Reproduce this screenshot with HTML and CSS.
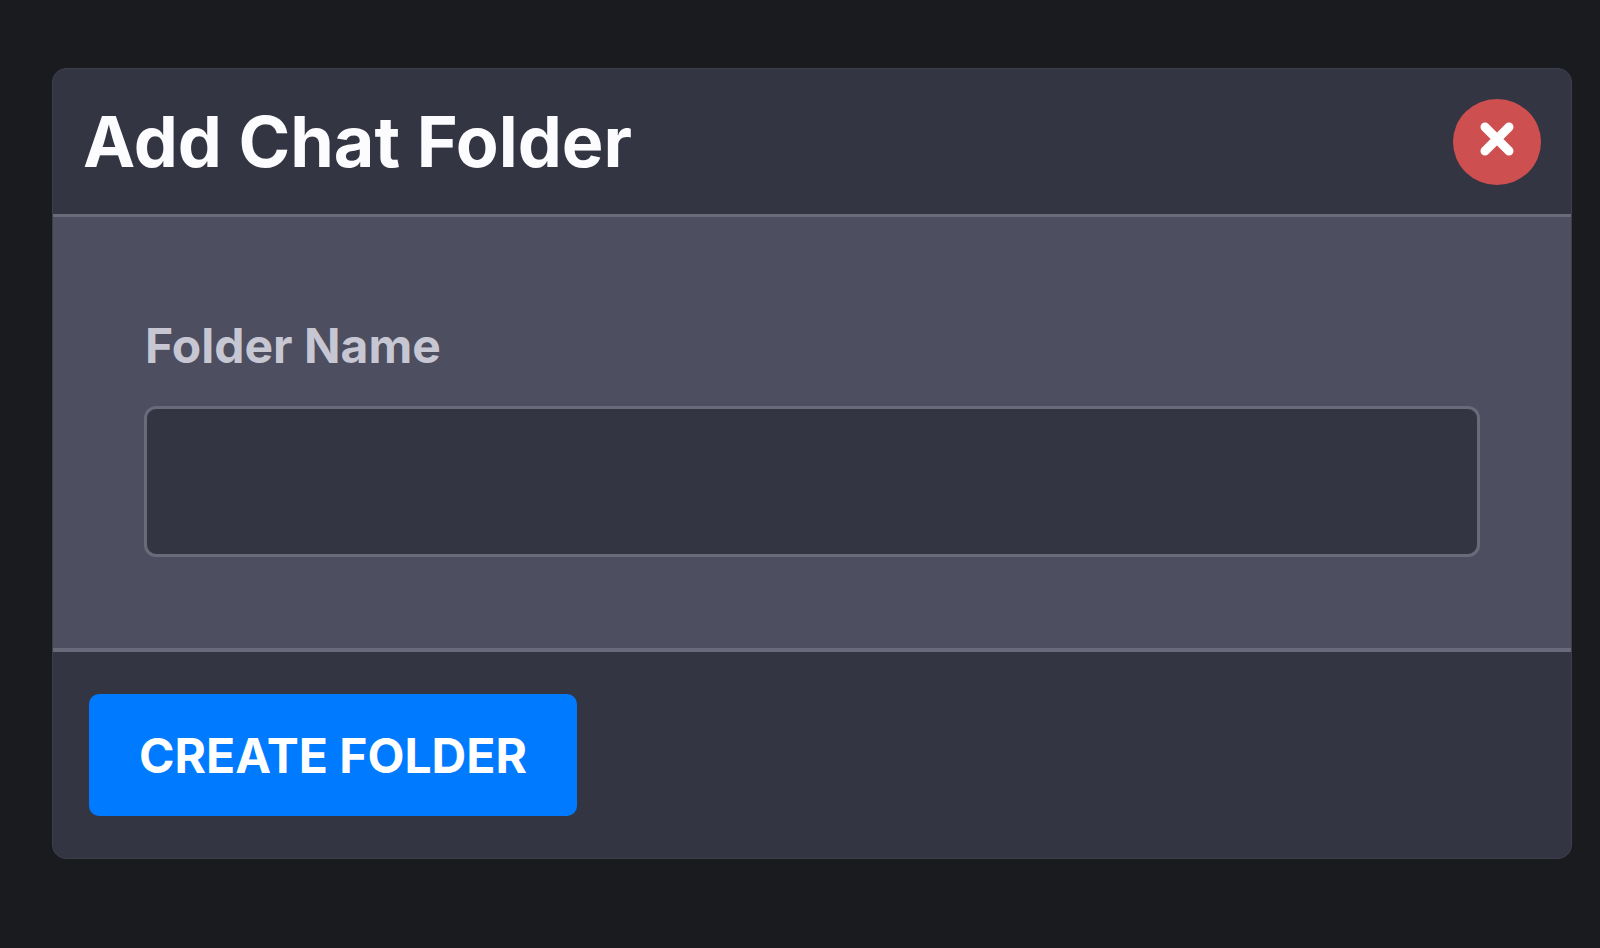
FILE: index.html
```html
<!DOCTYPE html>
<html lang="en">
<head>
    <meta charset="UTF-8">
    <title>Add Chat Folder</title>
    <link rel="stylesheet" href="styles.css">
</head>
<body>
    <form class="modal">
        <header class="modal-header">
            <h1>Add Chat Folder</h1>
            <button type="button" class="close" aria-label="Close">
                <svg viewBox="0 0 36 36" width="36" height="36">
                    <path d="M6 6L30 30M30 6L6 30"/>
                </svg>
            </button>
        </header>
        <div class="modal-body">
            <label for="folder_name">Folder Name</label>
            <input type="text" id="folder_name">
        </div>
        <footer class="modal-footer">
            <button type="submit" class="create">CREATE FOLDER</button>
        </footer>
    </form>
</body>
</html>
```
FILE: styles.css
```css
* {box-sizing: border-box;}
body {margin: 0; padding: 68px 28px 68px 52px; background: #1a1b1f; font-family: Inter, "Liberation Sans", sans-serif;}
.modal {border: 1px solid #3c3e4b; border-radius: 14px; overflow: hidden; background: #333542;}
.modal-header {display: flex; align-items: center; justify-content: space-between; height: 148px; padding: 0 30px; border-bottom: 3px solid #696a7a;}
.modal-header h1 {margin: 0; font-size: 70px; line-height: 80px; font-weight: 700; color: #fcfcff;}
.close {display: flex; align-items: center; justify-content: center; width: 88px; height: 86px; padding: 0 0 6px; border: 0; border-radius: 50%; background: #cd4f50; cursor: pointer;}
.close path {fill: none; stroke: #fff; stroke-width: 9; stroke-linecap: round;}
.modal-body {padding: 97px 91px 91px; background: #4d4e5f;}
.modal-body label {display: block; margin-bottom: 28px; padding-left: 1px; font-size: 48px; line-height: 64px; font-weight: 700; color: #c6c7d3;}
.modal-body input {display: block; width: 100%; height: 151px; padding: 0 32px; border: 3px solid #696a7a; border-radius: 12px; background: #333542; color: #fff; font: inherit; font-size: 48px;}
.modal-footer {padding: 42px 36px; border-top: 4px solid #696a7a;}
.create {display: block; height: 122px; padding: 0 50px; border: 0; border-radius: 10px; background: #007bff; color: #fff; font: inherit; font-size: 48px; font-weight: 700; cursor: pointer;}
```
